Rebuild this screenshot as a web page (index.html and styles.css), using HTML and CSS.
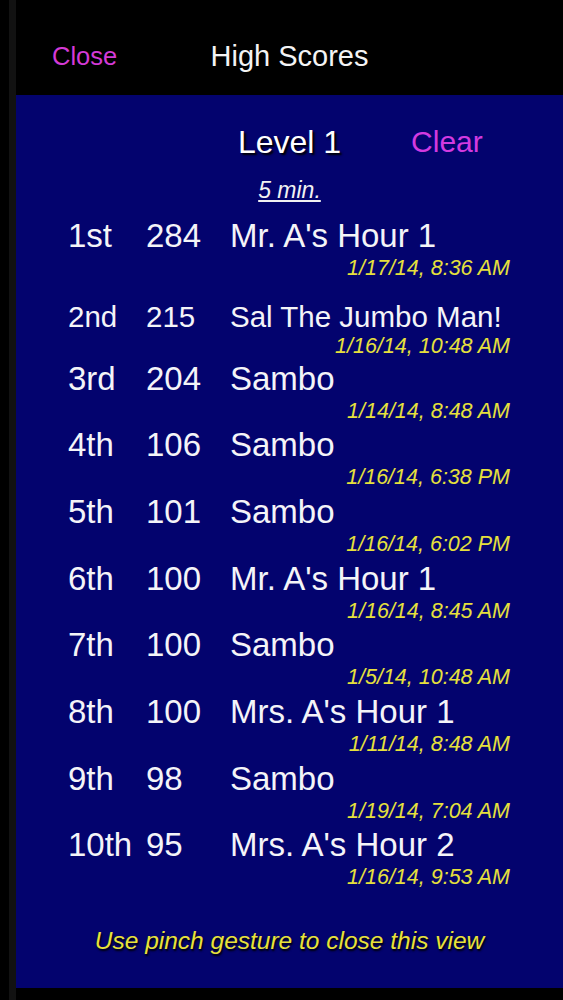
FILE: index.html
```html
<!DOCTYPE html>
<html lang="en">
<head>
    <meta charset="UTF-8">
    <meta name="viewport" content="width=device-width, initial-scale=1.0">
    <title>High Scores</title>
    <link rel="stylesheet" href="styles.css">
</head>
<body>
    <div class="screen">
        <div class="edge"></div>
        <div class="main">
            <div class="top-bar">
                <a class="close-link" href="#">Close</a>
                <h1 class="title">High Scores</h1>
                <span></span>
            </div>

            <div class="scores-panel">
                <div class="level-line">
                    <span></span>
                    <h2 class="level-name">Level 1</h2>
                    <a class="clear-link" href="#">Clear</a>
                </div>
                <div class="duration">5 min.</div>

                <div class="score-list">
                    <div class="score-row first">
                        <span>1st</span><span>284</span><span>Mr. A's Hour 1</span>
                        <div class="date">1/17/14, 8:36 AM</div>
                    </div>
                    <div class="score-row shrunk">
                        <span>2nd</span><span>215</span><span>Sal The Jumbo Man!</span>
                        <div class="date">1/16/14, 10:48 AM</div>
                    </div>
                    <div class="score-row">
                        <span>3rd</span><span>204</span><span>Sambo</span>
                        <div class="date">1/14/14, 8:48 AM</div>
                    </div>
                    <div class="score-row">
                        <span>4th</span><span>106</span><span>Sambo</span>
                        <div class="date">1/16/14, 6:38 PM</div>
                    </div>
                    <div class="score-row">
                        <span>5th</span><span>101</span><span>Sambo</span>
                        <div class="date">1/16/14, 6:02 PM</div>
                    </div>
                    <div class="score-row">
                        <span>6th</span><span>100</span><span>Mr. A's Hour 1</span>
                        <div class="date">1/16/14, 8:45 AM</div>
                    </div>
                    <div class="score-row">
                        <span>7th</span><span>100</span><span>Sambo</span>
                        <div class="date">1/5/14, 10:48 AM</div>
                    </div>
                    <div class="score-row">
                        <span>8th</span><span>100</span><span>Mrs. A's Hour 1</span>
                        <div class="date">1/11/14, 8:48 AM</div>
                    </div>
                    <div class="score-row">
                        <span>9th</span><span>98</span><span>Sambo</span>
                        <div class="date">1/19/14, 7:04 AM</div>
                    </div>
                    <div class="score-row">
                        <span>10th</span><span>95</span><span>Mrs. A's Hour 2</span>
                        <div class="date">1/16/14, 9:53 AM</div>
                    </div>
                </div>

                <p class="hint">Use pinch gesture to close this view</p>
            </div>
        </div>
    </div>
</body>
</html>
```

FILE: styles.css
```css
body {
    margin: 0;
    background-color: #000;
    font-family: "Liberation Sans", Arial, sans-serif;
}
.screen {
    display: flex;
    height: 1000px;
}
.edge {
    width: 9px;
    border-right: 7px solid #121212;
    background-color: #000;
}
.main {
    flex: 1;
    display: flex;
    flex-direction: column;
}
.top-bar {
    display: grid;
    grid-template-columns: 1fr auto 1fr;
    align-items: center;
    height: 95px;
    padding-top: 17px;
    box-sizing: border-box;
    background-color: #000;
}
.close-link {
    justify-self: start;
    padding-left: 36px;
    color: #d43ad6;
    font-size: 25.5px;
    text-decoration: none;
    line-height: 40px;
}
.title {
    margin: 0;
    color: #f4f4f4;
    font-size: 29px;
    font-weight: normal;
    line-height: 40px;
}
.scores-panel {
    height: 893px;
    background-color: #03036e;
    display: flex;
    flex-direction: column;
}
.level-line {
    display: grid;
    grid-template-columns: 1fr auto 1fr;
    margin-top: 27px;
    line-height: 40px;
}
.level-name {
    margin: 0;
    color: #fff;
    font-size: 32px;
    font-weight: normal;
    text-shadow: 2px 2px 2px #000;
}
.clear-link {
    justify-self: start;
    padding-left: 70px;
    color: #d23ae0;
    font-size: 30px;
    text-decoration: none;
}
.duration {
    margin-top: 14px;
    text-align: center;
    color: #f2f2f2;
    font-size: 23px;
    font-style: italic;
    text-decoration: underline;
    line-height: 28px;
}
.score-list {
    margin-top: 12px;
    padding: 0 53px 0 52px;
}
.score-row {
    display: grid;
    grid-template-columns: 78px 84px 1fr;
    color: #f4f4f8;
    font-size: 33px;
    line-height: 40px;
    margin-bottom: 2.67px;
    white-space: nowrap;
}
.score-row.first {
    margin-bottom: 12px;
}
.score-row.shrunk {
    font-size: 29.5px;
    line-height: 30px;
    padding-top: 10px;
}
.score-row .date {
    grid-column: 1 / -1;
    text-align: right;
    color: #e6e03c;
    font-size: 21.5px;
    font-style: italic;
    line-height: 24px;
}
.score-row.shrunk .date {
    margin-top: 4px;
    line-height: 20px;
}
.hint {
    margin: 34px 0 0;
    text-align: center;
    color: #e8e23a;
    font-size: 24.5px;
    font-style: italic;
    line-height: 30px;
    text-shadow: 1px 2px 2px #000;
}
```
